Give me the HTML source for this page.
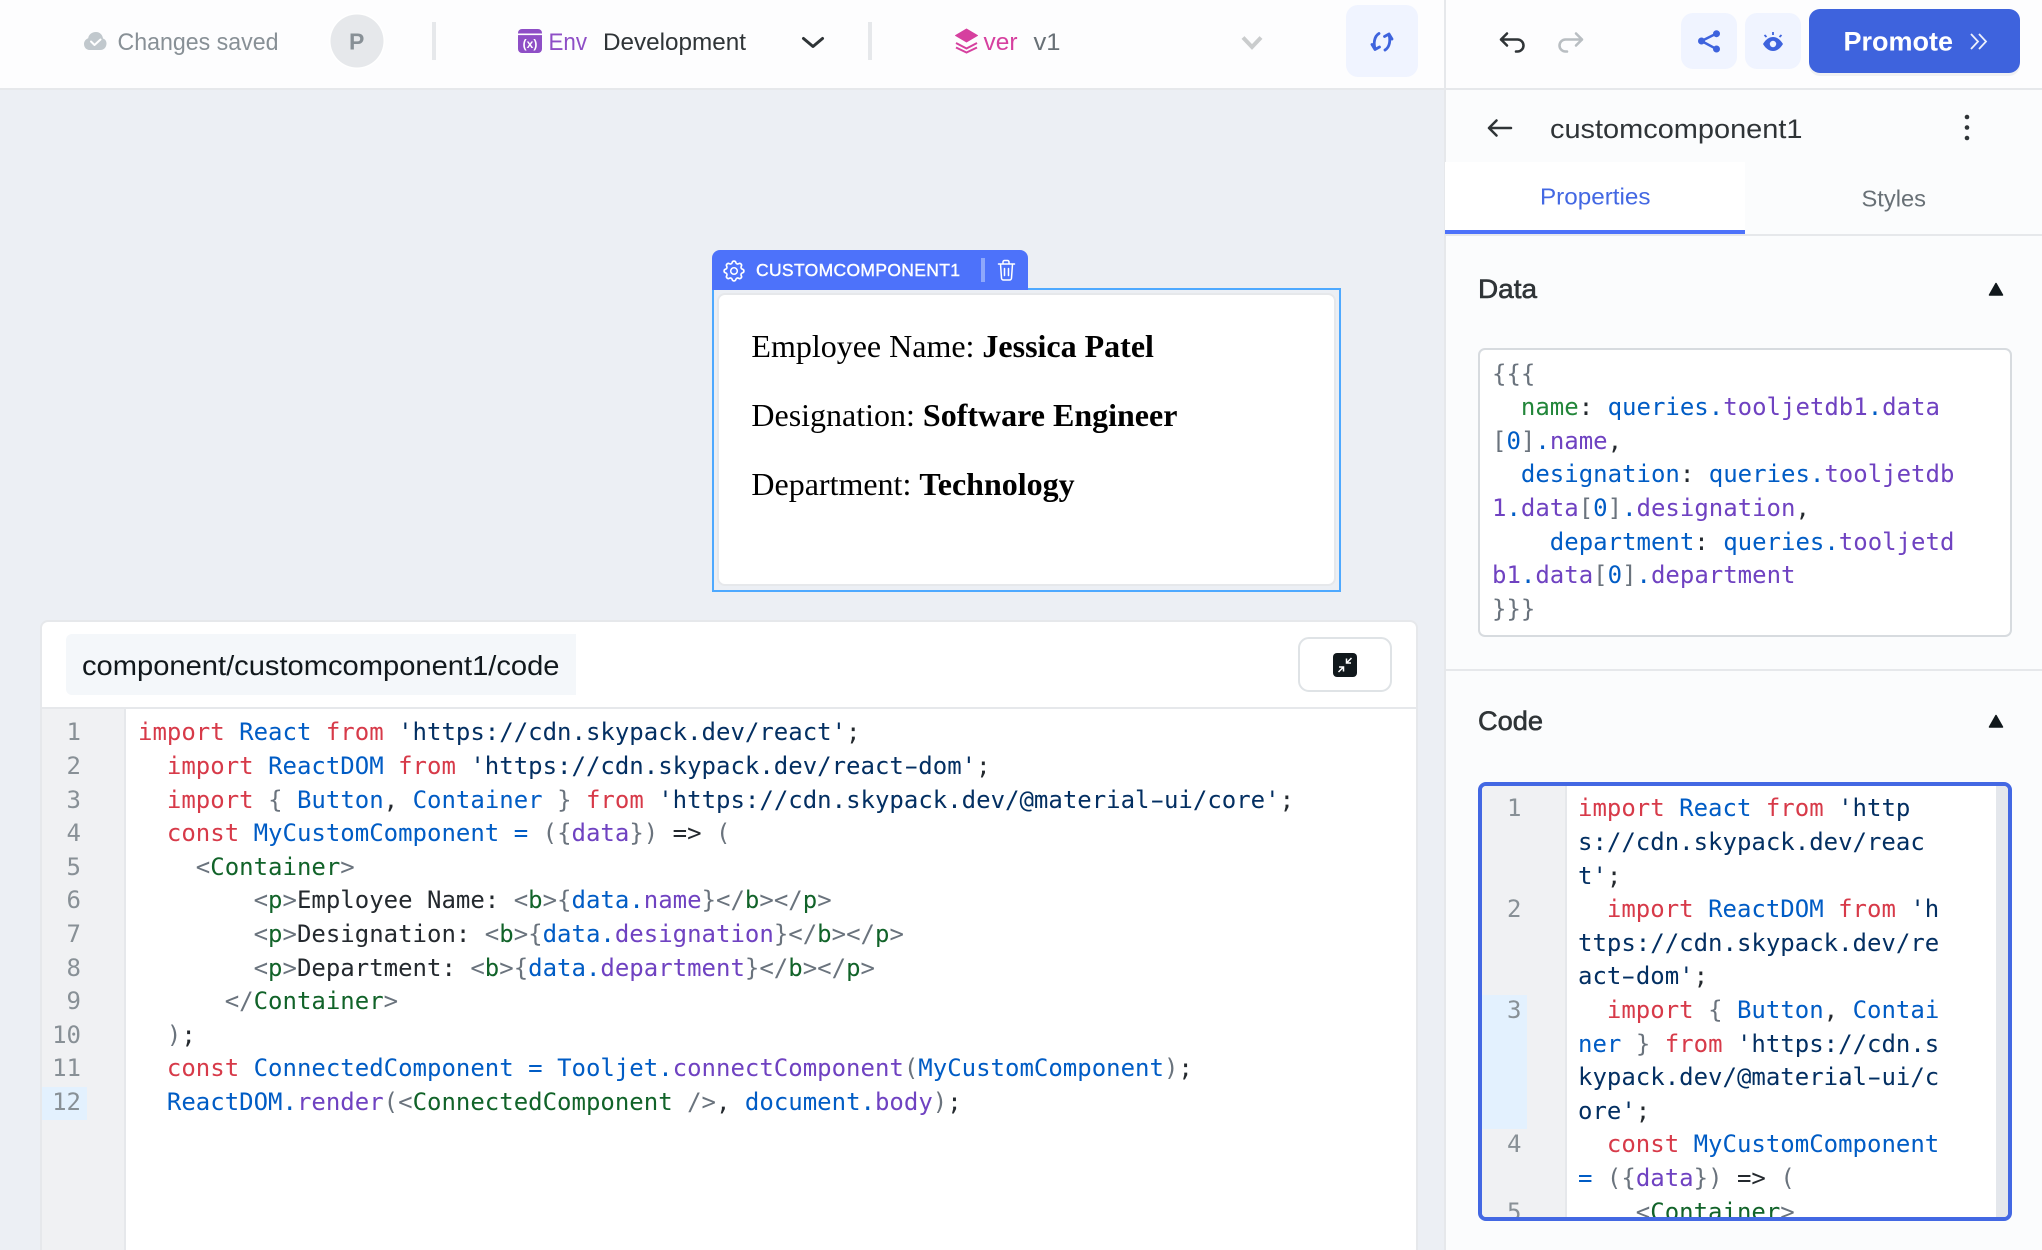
<!DOCTYPE html>
<html><head><meta charset="utf-8"><style>
html,body{margin:0;padding:0;width:2042px;height:1250px;overflow:hidden;background:#eceff4;font-family:"Liberation Sans",sans-serif}
body{position:relative}
.a{position:absolute;box-sizing:border-box}
.m{position:absolute;white-space:pre;font:24px/33.6px "DejaVu Sans Mono",monospace;color:#24292e}
.m div{height:33.6px}
.n{position:absolute;text-align:right;font:24px/33.6px "DejaVu Sans Mono",monospace;color:#889096;white-space:pre}
.n div{height:33.6px}
.k{color:#d73a49}.d{color:#005cc5}.s{color:#032f62}.v{color:#6f42c1}.t{color:#116329}.g{color:#6a737d}.x{color:#22863a}
.h{display:inline-block;transform:scaleX(1.7)}
.card p{position:absolute;left:32.4px;margin:0;font:32px/37px "Liberation Serif",serif;color:#000;white-space:pre}
svg{position:absolute;left:0;top:0}
</style></head><body>

<div class="a" style="left:0;top:0;width:2042px;height:88px;background:#fdfdfe"></div>
<div class="a" style="left:0;top:88px;width:2042px;height:2px;background:#e6e8eb"></div>
<div class="a" style="left:1446px;top:90px;width:596px;height:1160px;background:#fbfcfd"></div>
<div class="a" style="left:1444px;top:0;width:2px;height:1250px;background:#e6e8eb"></div>

<div class="a" style="left:1346px;top:5px;width:72px;height:72px;background:#f0f4ff;border-radius:12px"></div>
<div class="a" style="left:1681px;top:13px;width:56px;height:56px;background:#f0f4ff;border-radius:12px"></div>
<div class="a" style="left:1745px;top:13px;width:56px;height:56px;background:#f0f4ff;border-radius:12px"></div>
<div class="a" style="left:1809px;top:9px;width:211px;height:64px;background:#3e63dd;border-radius:11px;box-shadow:0 3px 0 #f0f1f3"></div>

<div class="a" style="left:1445px;top:162px;width:300px;height:68px;background:#fff"></div>
<div class="a" style="left:1445px;top:230px;width:300px;height:4px;background:#4d72fa"></div>
<div class="a" style="left:1445px;top:234px;width:597px;height:2px;background:#e6e8eb"></div>
<div class="a" style="left:1446px;top:669px;width:596px;height:2px;background:#e6e8eb"></div>

<!-- widget -->
<div class="a" style="left:712px;top:288px;width:629px;height:304px;border:2px solid #4ea9ff"></div>
<div class="a" style="left:712px;top:250px;width:316px;height:40px;background:#4d72fa;border-radius:8px 8px 0 0"></div>
<div class="a" style="left:981px;top:258px;width:4px;height:24px;background:#8ea8fb"></div>
<div class="a card" style="left:717px;top:293px;width:619px;height:293px;background:#fff;border:2px solid #e6e8eb;border-radius:8px">
<p style="top:33px">Employee Name: <b>Jessica Patel</b></p>
<p style="top:102px">Designation: <b>Software Engineer</b></p>
<p style="top:171px">Department: <b>Technology</b></p>
</div>

<!-- editor panel -->
<div class="a" style="left:40px;top:620px;width:1378px;height:630px;background:#fff;border:2px solid #e6e8eb;border-bottom:0;border-radius:8px 8px 0 0"></div>
<div class="a" style="left:66px;top:634px;width:510px;height:61px;background:#f4f7fa;border-radius:6px 0 0 6px"></div>
<div class="a" style="left:1298px;top:637px;width:94px;height:55px;background:#fff;border:2px solid #dfe3e6;border-radius:11px"></div>
<div class="a" style="left:42px;top:707px;width:1374px;height:2px;background:#e6e8eb"></div>
<div class="a" style="left:42px;top:709px;width:82px;height:541px;background:#f0f1f3"></div>
<div class="a" style="left:124px;top:709px;width:2px;height:541px;background:#e6e8eb"></div>
<div class="a" style="left:42px;top:1087px;width:45px;height:33px;background:#e3f1fe"></div>

<div class="n" style="left:42px;top:716.4px;width:39px"><div>1</div><div>2</div><div>3</div><div>4</div><div>5</div><div>6</div><div>7</div><div>8</div><div>9</div><div>10</div><div>11</div><div>12</div></div>
<div class="m" style="left:138px;top:716.4px"><div><span class="k">import</span> <span class="d">React</span> <span class="k">from</span> <span class="s">'https://cdn.skypack.dev/react'</span>;</div><div>  <span class="k">import</span> <span class="d">ReactDOM</span> <span class="k">from</span> <span class="s">'https://cdn.skypack.dev/react<span class="h">-</span>dom'</span>;</div><div>  <span class="k">import</span> <span class="g">{</span> <span class="d">Button</span>, <span class="d">Container</span> <span class="g">}</span> <span class="k">from</span> <span class="s">'https://cdn.skypack.dev/@material<span class="h">-</span>ui/core'</span>;</div><div>  <span class="k">const</span> <span class="d">MyCustomComponent</span> <span class="d">=</span> <span class="g">(</span><span class="g">{</span><span class="v">data</span><span class="g">}</span><span class="g">)</span> =&gt; <span class="g">(</span></div><div>    <span class="g">&lt;</span><span class="t">Container</span><span class="g">&gt;</span></div><div>        <span class="g">&lt;</span><span class="t">p</span><span class="g">&gt;</span>Employee Name: <span class="g">&lt;</span><span class="t">b</span><span class="g">&gt;{</span><span class="d">data.</span><span class="v">name</span><span class="g">}&lt;/</span><span class="t">b</span><span class="g">&gt;&lt;/</span><span class="t">p</span><span class="g">&gt;</span></div><div>        <span class="g">&lt;</span><span class="t">p</span><span class="g">&gt;</span>Designation: <span class="g">&lt;</span><span class="t">b</span><span class="g">&gt;{</span><span class="d">data.</span><span class="v">designation</span><span class="g">}&lt;/</span><span class="t">b</span><span class="g">&gt;&lt;/</span><span class="t">p</span><span class="g">&gt;</span></div><div>        <span class="g">&lt;</span><span class="t">p</span><span class="g">&gt;</span>Department: <span class="g">&lt;</span><span class="t">b</span><span class="g">&gt;{</span><span class="d">data.</span><span class="v">department</span><span class="g">}&lt;/</span><span class="t">b</span><span class="g">&gt;&lt;/</span><span class="t">p</span><span class="g">&gt;</span></div><div>      <span class="g">&lt;/</span><span class="t">Container</span><span class="g">&gt;</span></div><div>  <span class="g">)</span>;</div><div>  <span class="k">const</span> <span class="d">ConnectedComponent</span> <span class="d">=</span> <span class="d">Tooljet.</span><span class="v">connectComponent</span><span class="g">(</span><span class="d">MyCustomComponent</span><span class="g">)</span>;</div><div>  <span class="d">ReactDOM.</span><span class="v">render</span><span class="g">(&lt;</span><span class="t">ConnectedComponent</span> <span class="g">/&gt;</span>, <span class="d">document.</span><span class="v">body</span><span class="g">)</span>;</div></div>

<!-- Data box -->
<div class="a" style="left:1478px;top:348px;width:534px;height:289px;background:#fff;border:2px solid #d7dbdf;border-radius:7px"></div>
<div class="m" style="left:1492px;top:357.6px"><div><span class="g">{{{</span></div><div>  <span class="x">name</span>: <span class="d">queries.</span><span class="v">tooljetdb1</span><span class="d">.</span><span class="v">data</span></div><div><span class="g">[</span><span class="d">0</span><span class="g">]</span><span class="d">.</span><span class="v">name</span>,</div><div>  <span class="d">designation</span>: <span class="d">queries.</span><span class="v">tooljetdb</span></div><div><span class="v">1</span><span class="d">.</span><span class="v">data</span><span class="g">[</span><span class="d">0</span><span class="g">]</span><span class="d">.</span><span class="v">designation</span>,</div><div>    <span class="d">department</span>: <span class="d">queries.</span><span class="v">tooljetd</span></div><div><span class="v">b1</span><span class="d">.</span><span class="v">data</span><span class="g">[</span><span class="d">0</span><span class="g">]</span><span class="d">.</span><span class="v">department</span></div><div><span class="g">}}}</span></div></div>

<!-- Code box -->
<div class="a" style="left:1478px;top:782px;width:534px;height:439px;background:#fff;border:4px solid #4368e3;border-radius:8px;overflow:hidden">
  <div class="a" style="left:0;top:0;width:83px;height:431px;background:#f0f1f3"></div>
  <div class="a" style="left:83px;top:0;width:2px;height:431px;background:#e6e8eb"></div>
  <div class="a" style="left:0;top:209px;width:45px;height:134px;background:#e3f1fe"></div>
  <div class="a" style="left:514px;top:0;width:12px;height:431px;background:#e4e7ec"></div>
  <div class="n" style="left:0;top:6.4px;width:39.5px"><div>1</div><div></div><div></div><div>2</div><div></div><div></div><div>3</div><div></div><div></div><div></div><div>4</div><div></div><div>5</div></div>
  <div class="m" style="left:96px;top:6.4px"><div><span class="k">import</span> <span class="d">React</span> <span class="k">from</span> <span class="s">'http</span></div><div><span class="s">s://cdn.skypack.dev/reac</span></div><div><span class="s">t'</span>;</div><div>  <span class="k">import</span> <span class="d">ReactDOM</span> <span class="k">from</span> <span class="s">'h</span></div><div><span class="s">ttps://cdn.skypack.dev/re</span></div><div><span class="s">act<span class="h">-</span>dom'</span>;</div><div>  <span class="k">import</span> <span class="g">{</span> <span class="d">Button</span>, <span class="d">Contai</span></div><div><span class="d">ner</span> <span class="g">}</span> <span class="k">from</span> <span class="s">'https://cdn.s</span></div><div><span class="s">kypack.dev/@material<span class="h">-</span>ui/c</span></div><div><span class="s">ore'</span>;</div><div>  <span class="k">const</span> <span class="d">MyCustomComponent</span></div><div><span class="d">=</span> <span class="g">(</span><span class="g">{</span><span class="v">data</span><span class="g">}</span><span class="g">)</span> =&gt; <span class="g">(</span></div><div>    <span class="g">&lt;</span><span class="t">Container</span><span class="g">&gt;</span></div></div>
</div>

<svg width="2042" height="1250" viewBox="0 0 2042 1250" font-family="'Liberation Sans',sans-serif">
<!-- header text -->
<text x="117.500" y="50" font-size="24" fill="#889096" textLength="161" lengthAdjust="spacingAndGlyphs">Changes saved</text>
<circle cx="357" cy="41" r="28" fill="#fff"/><circle cx="357" cy="41" r="26.500" fill="#e6e8eb"/>
<text x="349" y="49.500" font-size="23" font-weight="bold" fill="#889096">P</text>
<rect x="432" y="22" width="4" height="38" fill="#e6e8eb"/>
<rect x="868" y="22" width="4" height="38" fill="#e6e8eb"/>
<rect x="518" y="29" width="24" height="24" rx="4" fill="#8e4ec6"/>
<rect x="518" y="33.500" width="24" height="1.600" fill="#fff"/>
<text x="530" y="48" font-size="12" font-weight="bold" fill="#fff" text-anchor="middle">(x)</text>
<text x="548.500" y="50" font-size="24" fill="#8e4ec6" textLength="38.500" lengthAdjust="spacingAndGlyphs">Env</text>
<text x="603" y="50" font-size="24" fill="#2f3437" textLength="143" lengthAdjust="spacingAndGlyphs">Development</text>
<path d="M803.500 38.500l9.500 8l9.500-8" fill="none" stroke="#2f3437" stroke-width="3" stroke-linecap="round" stroke-linejoin="round"/>
<path d="M966.500 29l11 6.500l-11 6.500l-11-6.500z" fill="#d6409f" stroke="#d6409f" stroke-linejoin="round"/>
<path d="M956 43l10.500 5.500l10.500-5.500M956 47.500l10.500 5l10.500-5" fill="none" stroke="#d6409f" stroke-width="2"/>
<text x="983.500" y="50" font-size="24" fill="#d6409f" textLength="34" lengthAdjust="spacingAndGlyphs">ver</text>
<text x="1033.500" y="50" font-size="24" fill="#687076" textLength="27" lengthAdjust="spacingAndGlyphs">v1</text>
<path d="M1243 37.500l9 9.500l9-9.500" fill="none" stroke="#cacccd" stroke-width="4"/>
<!-- sync -->
<g fill="none" stroke="#3e63dd" stroke-width="2.800" stroke-linecap="round" stroke-linejoin="round">
<path d="M1379 33.500c-5 3-5.500 10-4 15M1372 44.500l3 5l4.500-2.500"/>
<path d="M1385 50c5-3 5.500-10 4-15M1392 39l-3-5l-4.500 2.500"/>
</g>
<!-- undo/redo -->
<path transform="translate(1493.500 24.500) scale(1.500)" d="M9 14l-4 -4l4 -4M5 10h11a4 4 0 1 1 0 8h-1" fill="none" stroke="#2f3437" stroke-width="1.700" stroke-linecap="round" stroke-linejoin="round"/>
<path transform="translate(1589.500 24.500) scale(-1.500 1.500)" d="M9 14l-4 -4l4 -4M5 10h11a4 4 0 1 1 0 8h-1" fill="none" stroke="#b9bec2" stroke-width="1.700" stroke-linecap="round" stroke-linejoin="round"/>
<!-- share -->
<g fill="#3e63dd" stroke="#3e63dd"><path d="M1716 33.700l-14.500 7.300l14.500 7.800" fill="none" stroke-width="2.500"/>
<circle cx="1716.500" cy="33.700" r="3" /><circle cx="1701.500" cy="41" r="3"/><circle cx="1716.500" cy="49" r="3"/></g>
<!-- eye -->
<path d="M1763 44c3-5 6.500-7 10-7s7 2 10 7c-3 5-6.500 7-10 7s-7-2-10-7z" fill="#3e63dd"/>
<circle cx="1773" cy="44" r="3.200" fill="#f0f4ff"/>
<path d="M1773 32v3M1764.500 35l2 2M1781.500 35l-2 2" stroke="#3e63dd" stroke-width="1.800" fill="none"/>
<!-- promote -->
<text x="1843.500" y="50.500" font-size="26.500" font-weight="bold" fill="#fff" textLength="109.500" lengthAdjust="spacingAndGlyphs">Promote</text>
<path d="M1971 34l7 7.500l-7 7.500M1979 34l7 7.500l-7 7.500" fill="none" stroke="#fff" stroke-width="1.800" opacity=".9"/>
<!-- cloud -->
<path d="M96 32c4 0 6.500 3 7 6.500c2.500.8 3.500 3 3.500 5c0 3.500-2.500 6.500-6 6.500h-11c-3 0-5.500-2.500-5.500-6c0-2.800 1.800-5 4.200-5.800C88.500 35 91.500 32 96 32z" fill="#c1c8cd"/>
<path d="M91 41.500l3.500 3.500l6-5.500" fill="none" stroke="#fff" stroke-width="2" stroke-linecap="round" stroke-linejoin="round"/>
<!-- title row -->
<path d="M1489 128h22M1489 128l7.500-7.500M1489 128l7.500 7.500" fill="none" stroke="#2f3437" stroke-width="2.500" stroke-linecap="round"/>
<text x="1550" y="138" font-size="27" fill="#2f3437" textLength="252.500" lengthAdjust="spacingAndGlyphs">customcomponent1</text>
<circle cx="1967" cy="117" r="2.300" fill="#2f3437"/><circle cx="1967" cy="127.500" r="2.300" fill="#2f3437"/><circle cx="1967" cy="138" r="2.300" fill="#2f3437"/>
<text x="1540" y="204.500" font-size="23.500" fill="#4368e3" textLength="110.500" lengthAdjust="spacingAndGlyphs">Properties</text>
<text x="1861.500" y="206.500" font-size="23.500" fill="#687076" textLength="64.500" lengthAdjust="spacingAndGlyphs">Styles</text>
<text x="1478" y="298" font-size="27" fill="#2f3437" stroke="#2f3437" stroke-width=".6" textLength="59" lengthAdjust="spacingAndGlyphs">Data</text>
<text x="1478" y="730" font-size="27" fill="#2f3437" stroke="#2f3437" stroke-width=".6" textLength="65" lengthAdjust="spacingAndGlyphs">Code</text>
<path d="M1996 283.500l6.500 11.500h-13z" fill="#11181c" stroke="#11181c" stroke-width="1.500" stroke-linejoin="round"/>
<path d="M1996 715.500l6.500 11.500h-13z" fill="#11181c" stroke="#11181c" stroke-width="1.500" stroke-linejoin="round"/>
<!-- path text -->
<text x="82" y="675" font-size="27.500" fill="#11181c" textLength="477.500" lengthAdjust="spacingAndGlyphs">component/customcomponent1/code</text>
<!-- compress icon -->
<rect x="1333" y="653" width="24" height="24" rx="4" fill="#11181c"/>
<path d="M1339 667h4.500v4.500M1343 667.500l-4.500 4.500M1351 663h-4.500v-4.500M1347 662.500l4.500-4.500" fill="none" stroke="#fff" stroke-width="1.500"/>
<!-- widget label -->
<g fill="none" stroke="#fff" stroke-width="1.500" stroke-linecap="round" stroke-linejoin="round">
<path transform="translate(720.800 257.800) scale(1.100)" d="M10.325 4.317c.426-1.756 2.924-1.756 3.35 0a1.724 1.724 0 0 0 2.573 1.066c1.543-.94 3.31.826 2.37 2.37a1.724 1.724 0 0 0 1.065 2.572c1.756.426 1.756 2.924 0 3.35a1.724 1.724 0 0 0-1.066 2.573c.94 1.543-.826 3.31-2.37 2.37a1.724 1.724 0 0 0-2.572 1.065c-.426 1.756-2.924 1.756-3.35 0a1.724 1.724 0 0 0-2.573-1.066c-1.543.94-3.31-.826-2.37-2.37a1.724 1.724 0 0 0-1.065-2.572c-1.756-.426-1.756-2.924 0-3.35a1.724 1.724 0 0 0 1.066-2.573c-.94-1.543.826-3.31 2.37-2.37 1 .608 2.296.07 2.572-1.065z"/>
<circle cx="734" cy="271" r="3.300"/>
<path d="M998.500 264h16M1000.500 264l1 14a2 2 0 0 0 2 2h6a2 2 0 0 0 2-2l1-14M1003 264v-2a1.500 1.500 0 0 1 1.500-1.500h3a1.500 1.500 0 0 1 1.500 1.500v2M1004.500 268.500v7M1008.500 268.500v7"/>
</g>
<text x="756" y="276" font-size="17.500" fill="#fff" stroke="#fff" stroke-width=".4" textLength="204" lengthAdjust="spacing">CUSTOMCOMPONENT1</text>
</svg>
</body></html>
